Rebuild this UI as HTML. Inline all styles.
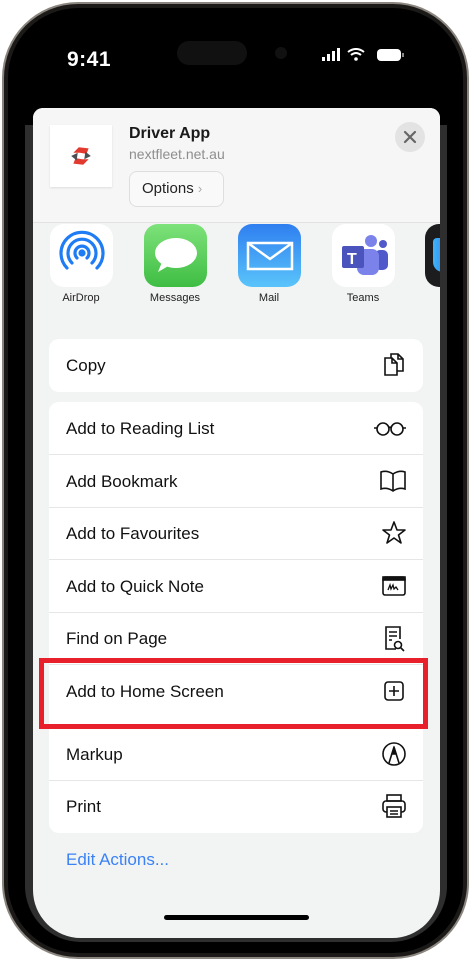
<!DOCTYPE html>
<html><head><meta charset="utf-8"><style>
*{margin:0;padding:0;box-sizing:border-box}
body{width:471px;height:962px;background:#fff;position:relative;overflow:hidden;font-family:"Liberation Sans",Arial,sans-serif}
.frame{position:absolute;left:2px;top:2px;width:467px;height:957px;border-radius:76px;background:#8a857e}
.frame2{position:absolute;left:4px;top:4px;width:463px;height:953px;border-radius:74px;background:#1b1a18}
.bezel{position:absolute;left:8px;top:8px;width:455px;height:945px;border-radius:70px;background:#000}
.screen{position:absolute;left:25px;top:17px;width:422px;height:925px;border-radius:56px;background:#000;overflow:hidden}
.strip{position:absolute;left:0;top:108px;width:422px;height:820px;background:#2e2e2e;border-radius:0 0 50px 50px}
.sheet{position:absolute;left:8px;top:91px;width:407px;height:830px;background:#f2f3f3;border-radius:10px 10px 48px 48px;overflow:hidden}
.t{position:absolute;color:#000}
.row{position:absolute;left:16px;width:374px;height:53px;background:#fff;font-size:17px;padding-left:17px;line-height:53px;color:#111}
.sep{position:absolute;left:16px;width:374px;height:1px;background:#e6e6e6}
.ic{position:absolute;right:16px;top:13px}
.app{position:absolute;top:116px;width:63px;height:63px;border-radius:14px}
.lab{position:absolute;top:184px;font-size:11px;color:#222;text-align:center;width:80px}
</style></head><body>
<div class="frame"></div><div class="frame2"></div><div class="bezel"></div>
<div class="screen">
 <div class="t" style="left:42px;top:31px;color:#fff;font-size:21px;font-weight:bold;letter-spacing:0.5px">9:41</div>
 <div style="position:absolute;left:152px;top:24px;width:70px;height:24px;border-radius:12px;background:#111"></div>
 <div style="position:absolute;left:250px;top:30px;width:12px;height:12px;border-radius:6px;background:#111"></div>
 <svg style="position:absolute;left:296px;top:31px" width="110" height="14" viewBox="0 0 110 14">
  <rect x="1" y="9" width="3" height="4" fill="#fff"/><rect x="6" y="6" width="3" height="7" fill="#fff"/><rect x="11" y="3" width="3" height="10" fill="#fff"/><rect x="16" y="0" width="3" height="13" fill="#fff"/>
  <path d="M27 4 Q35 -2 43 4" stroke="#fff" stroke-width="2" fill="none"/><path d="M30 7 Q35 3 40 7" stroke="#fff" stroke-width="2" fill="none"/><circle cx="35" cy="11" r="1.8" fill="#fff"/>
  <rect x="56" y="1" width="24" height="12" rx="4" fill="#fff"/><rect x="81" y="5" width="2" height="4" fill="#888"/>
 </svg>
 <div class="strip"></div>
 <div class="sheet">
  <div style="position:absolute;left:0;top:0;width:407px;height:115px;background:#f6f6f6;border-bottom:1px solid #e2e2e2"></div>
  <div style="position:absolute;left:17px;top:17px;width:62px;height:62px;background:#fff;box-shadow:0 1px 2px rgba(0,0,0,.1)"></div>
  <svg style="position:absolute;left:36px;top:36px" width="24" height="24" viewBox="0 0 22 22">
   <path d="M4 8 L9 3 L18 4 L16 9 L10 8Z" fill="#e23a2f"/><path d="M18 14 L13 19 L4 18 L6 13 L12 14Z" fill="#e23a2f"/><path d="M2 11 L8 8 L7 15Z" fill="#4a4f54"/><path d="M20 11 L14 14 L15 7Z" fill="#4a4f54"/>
  </svg>
  <div class="t" style="left:96px;top:17px;font-size:16px;font-weight:bold;color:#1a1a1a">Driver App</div>
  <div class="t" style="left:96px;top:38px;font-size:14px;color:#8e8e8e">nextfleet.net.au</div>
  <div style="position:absolute;left:96px;top:63px;width:95px;height:36px;border:1px solid #dedede;border-radius:8px;background:#f9f9f9;font-size:15px;line-height:34px;padding-left:12px;color:#222">Options <span style="color:#aaa;font-size:13px">&#x203A;</span></div>
  <div style="position:absolute;left:362px;top:14px;width:30px;height:30px;border-radius:15px;background:#e3e3e3"></div>
  <svg style="position:absolute;left:370px;top:22px" width="14" height="14"><path d="M2 2L12 12M12 2L2 12" stroke="#666" stroke-width="2.2" stroke-linecap="round"/></svg>

  <div class="app" style="left:17px;background:#fff"></div>
  <svg style="position:absolute;left:24px;top:122px" width="50" height="50" viewBox="0 0 50 50" fill="none" stroke="#1f7cf4" stroke-width="3.2" stroke-linecap="round">
   <path d="M10 38 A21 21 0 1 1 40 38"/><path d="M15 33 A14 14 0 1 1 35 33"/><path d="M20 28 A7 7 0 1 1 30 28"/><circle cx="25" cy="23" r="2" fill="#1f7cf4"/>
  </svg>
  <div class="app" style="left:111px;background:linear-gradient(#7de27a,#3fbd43)"></div>
  <svg style="position:absolute;left:119px;top:126px" width="48" height="44"><ellipse cx="24" cy="19" rx="21" ry="15" fill="#fff"/><path d="M10 28 L6 38 L18 31Z" fill="#fff"/></svg>
  <div class="app" style="left:205px;background:linear-gradient(#2f7ff0,#5ac4fa)"></div>
  <svg style="position:absolute;left:213px;top:133px" width="48" height="30"><rect x="2" y="2" width="44" height="26" fill="none" stroke="#fff" stroke-width="2.5"/><path d="M2 2 L24 18 L46 2" fill="none" stroke="#fff" stroke-width="2.5"/></svg>
  <div class="app" style="left:299px;background:#fff"></div>
  <svg style="position:absolute;left:306px;top:124px" width="50" height="48"><circle cx="32" cy="9" r="6" fill="#7b83eb"/><circle cx="44" cy="12" r="4" fill="#5059c9"/><rect x="36" y="18" width="13" height="20" rx="5" fill="#5059c9"/><rect x="18" y="17" width="22" height="26" rx="7" fill="#7b83eb"/><rect x="3" y="14" width="22" height="22" rx="2" fill="#4b53bc"/><text x="8" y="32" font-size="16" font-weight="bold" fill="#fff" font-family="Liberation Sans">T</text></svg>
  <div class="app" style="left:392px;background:#1c1c1e"></div>
  <div style="position:absolute;left:400px;top:130px;width:20px;height:34px;border-radius:4px 0 10px 10px;background:linear-gradient(90deg,#3fb4f5,#2a6ef0)"></div>
  <div class="lab" style="left:8px">AirDrop</div>
  <div class="lab" style="left:102px">Messages</div>
  <div class="lab" style="left:196px">Mail</div>
  <div class="lab" style="left:290px">Teams</div>
  <div class="lab" style="left:383px">W</div>

  <div class="row" style="top:231px;border-radius:10px">Copy
   <svg class="ic" width="26" height="28" viewBox="0 0 26 28" fill="none" stroke="#111" stroke-width="1.6"><path d="M4 6 H11 L16 11 V23 H4Z"/><path d="M10 6 V2 H17 L22 7 V19 H16"/><path d="M17 2 V7 H22"/><path d="M11 6 V11 H16"/></svg></div>

  <div class="row" style="top:294px;border-radius:10px 10px 0 0">Add to Reading List
   <svg class="ic" width="34" height="26" viewBox="0 0 34 26" fill="none" stroke="#111" stroke-width="1.6"><circle cx="10" cy="14" r="6"/><circle cx="24" cy="14" r="6"/><path d="M16 13 Q17 11 18 13 M1 13 H4 M30 13 H33"/></svg></div>
  <div class="row" style="top:347px">Add Bookmark
   <svg class="ic" width="28" height="26" viewBox="0 0 28 26" fill="none" stroke="#111" stroke-width="1.6"><path d="M14 6 Q8 2 2 4 V21 Q8 19 14 23 Q20 19 26 21 V4 Q20 2 14 6Z M14 6 V23"/></svg></div>
  <div class="row" style="top:399px">Add to Favourites
   <svg class="ic" width="26" height="26" viewBox="0 0 26 26" fill="none" stroke="#111" stroke-width="1.6" stroke-linejoin="round"><path d="M13 2 L16 10 H24 L17.5 15 L20 23 L13 18 L6 23 L8.5 15 L2 10 H10Z"/></svg></div>
  <div class="row" style="top:452px">Add to Quick Note
   <svg class="ic" width="26" height="26" viewBox="0 0 26 26" fill="none" stroke="#111" stroke-width="1.6"><rect x="2" y="4" width="22" height="18" rx="2"/><rect x="2" y="4" width="22" height="3" fill="#111"/><path d="M7 17 L9 12 L10 16 L12 12 L13 16 L15 14 L17 17" stroke-width="1.3"/></svg></div>
  <div class="row" style="top:504px">Find on Page
   <svg class="ic" width="26" height="28" viewBox="0 0 26 28" fill="none" stroke="#111" stroke-width="1.6"><path d="M15 24 H5 V2 H19 V14"/><path d="M8 7 H16 M8 11 H16 M8 15 H11"/><circle cx="17" cy="20" r="3.5"/><path d="M19.5 22.5 L23 26"/></svg></div>
  <div class="row" style="top:557px">Add to Home Screen
   <svg class="ic" width="26" height="26" viewBox="0 0 26 26" fill="none" stroke="#111" stroke-width="1.6"><rect x="4" y="4" width="18" height="18" rx="3"/><path d="M13 8 V18 M8 13 H18"/></svg></div>
  <div class="row" style="top:609px;height:60px"></div>
  <div class="row" style="top:620px">Markup
   <svg class="ic" width="26" height="26" viewBox="0 0 26 26" fill="none" stroke="#111" stroke-width="1.6"><circle cx="13" cy="13" r="11"/><path d="M8 22 L13 6 L18 22" stroke-linejoin="round"/><path d="M11 13 L15 13 L13 7Z" fill="#111"/></svg></div>
  <div class="row" style="top:672px;border-radius:0 0 10px 10px">Print
   <svg class="ic" width="26" height="26" viewBox="0 0 26 26" fill="none" stroke="#111" stroke-width="1.6"><rect x="6" y="2" width="14" height="6"/><rect x="2" y="8" width="22" height="11" rx="3"/><rect x="6" y="14" width="14" height="10" fill="#fff"/><path d="M9 18 H17 M9 21 H17"/></svg></div>
  <div class="sep" style="top:346px"></div><div class="sep" style="top:399px"></div><div class="sep" style="top:451px"></div><div class="sep" style="top:504px"></div><div class="sep" style="top:556px"></div><div class="sep" style="top:672px"></div>
  <div class="t" style="left:33px;top:742px;font-size:17px;color:#3a82f6">Edit Actions...</div>
  <div style="position:absolute;left:131px;top:807px;width:145px;height:5px;border-radius:3px;background:#000"></div>
 </div>
</div>
<div style="position:absolute;left:39px;top:658px;width:389px;height:71px;border:5px solid #e8202c"></div>
</body></html>
